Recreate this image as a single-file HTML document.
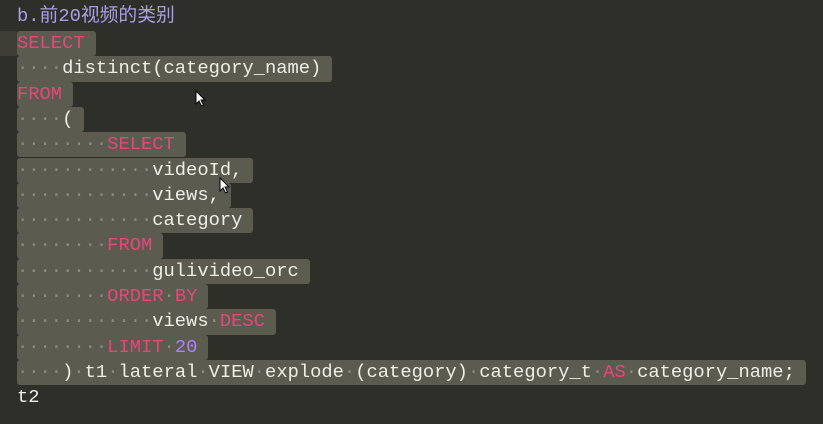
<!DOCTYPE html>
<html><head><meta charset="utf-8"><style>
body{margin:0;background:#2f2f2a;width:823px;height:424px;overflow:hidden;font-family:"Liberation Mono","Noto Sans CJK SC",monospace;font-size:18.8px;color:#eeeee6}
.l{position:absolute;left:17px;height:25.3px;line-height:25.3px;white-space:pre}
.s{background:#5c5b50;padding-right:11px;display:inline-block;height:25.3px;border-radius:3px}
.d{color:#8a8a80}
.k{color:#e8457a}
.n{color:#ae81ff}
</style></head><body>
<div style="position:absolute;left:0;top:31px;width:17px;height:25px;background:#3d3d36"></div>
<div class="l" style="top:4px;color:#a99ee6">b.前20视频的类别</div>
<div class="l" style="top:31px"><span class="s"><span class="k">SELECT</span></span></div>
<div class="l" style="top:56.3px"><span class="s"><span class="d">····</span>distinct(category_name)</span></div>
<div class="l" style="top:81.6px"><span class="s"><span class="k">FROM</span></span></div>
<div class="l" style="top:106.9px"><span class="s"><span class="d">····</span>(</span></div>
<div class="l" style="top:132.2px"><span class="s"><span class="d">········</span><span class="k">SELECT</span></span></div>
<div class="l" style="top:157.5px"><span class="s"><span class="d">············</span>videoId,</span></div>
<div class="l" style="top:182.8px"><span class="s"><span class="d">············</span>views,</span></div>
<div class="l" style="top:208.1px"><span class="s"><span class="d">············</span>category</span></div>
<div class="l" style="top:233.4px"><span class="s"><span class="d">········</span><span class="k">FROM</span></span></div>
<div class="l" style="top:258.7px"><span class="s"><span class="d">············</span>gulivideo_orc</span></div>
<div class="l" style="top:284px"><span class="s"><span class="d">········</span><span class="k">ORDER</span><span class="d">·</span><span class="k">BY</span></span></div>
<div class="l" style="top:309.3px"><span class="s"><span class="d">············</span>views<span class="d">·</span><span class="k">DESC</span></span></div>
<div class="l" style="top:334.6px"><span class="s"><span class="d">········</span><span class="k">LIMIT</span><span class="d">·</span><span class="n">20</span></span></div>
<div class="l" style="top:359.9px"><span class="s"><span class="d">····</span>)<span class="d">·</span>t1<span class="d">·</span>lateral<span class="d">·</span>VIEW<span class="d">·</span>explode<span class="d">·</span>(category)<span class="d">·</span>category_t<span class="d">·</span><span class="k">AS</span><span class="d">·</span>category_name;</span></div>
<div class="l" style="top:385.2px">t2</div>
<svg style="position:absolute;left:195px;top:90px" width="12" height="18" viewBox="0 0 12 18"><path d="M1 1 L1 14 L4 11 L6.5 16 L8.5 15 L6 10 L10 10 Z" fill="#fff" stroke="#000" stroke-width="1"/></svg>
<svg style="position:absolute;left:219px;top:177px" width="12" height="18" viewBox="0 0 12 18"><path d="M1 1 L1 14 L4 11 L6.5 16 L8.5 15 L6 10 L10 10 Z" fill="#fff" stroke="#000" stroke-width="1"/></svg>
</body></html>
